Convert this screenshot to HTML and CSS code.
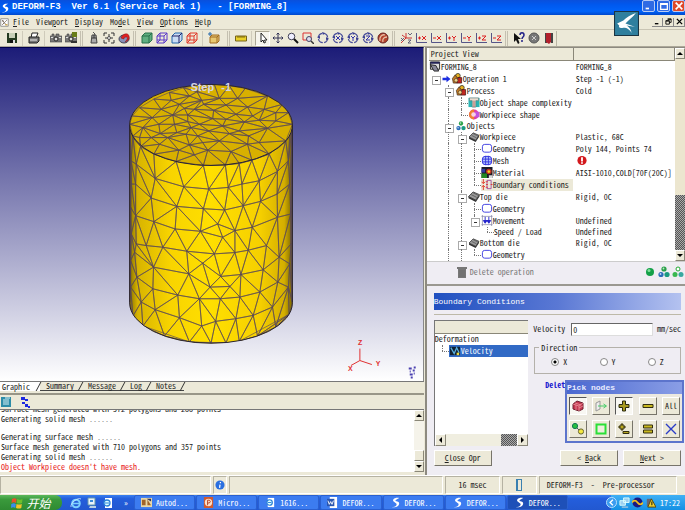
FILE: index.html
```html
<!DOCTYPE html>
<html lang="en">
<head>
<meta charset="utf-8">
<title>DEFORM-F3 - FORMING_8</title>
<link rel="stylesheet" href="styles.css">
</head>
<body>
<svg class="sprite" aria-hidden="true">
  <symbol id="logo" viewBox="0 0 12 12"><path d="M10 1C5 0 2 3 4 5s4 2 3 4-3 2-5 2c4 1 8-1 8-4S6 5 6 4s2-2 4-3z" fill="currentColor"/></symbol>
  <symbol id="doc" viewBox="0 0 12 12"><path d="M1 1h10v10H1z" fill="#fff" stroke="#777"/><path d="M3 3l5 6M3 9l3-3M7 5l2-2M4 3v2" stroke="#543"/><path d="M7 8h3v2H7z" fill="#ca5"/></symbol>
  <symbol id="save" viewBox="0 0 12 12"><path d="M1 1h10v10H1z" fill="#243a20"/><path d="M3 1h6v5H3z" fill="#c8d0b8"/><path d="M4 8h4v3H4z" fill="#111"/><path d="M7 8h2v3H7z" fill="#ddd"/></symbol>
  <symbol id="print" viewBox="0 0 12 12"><path d="M4 1h6L8 6H3z" fill="#fff" stroke="#222"/><path d="M1 5h10v4L9 11H1z" fill="#777" stroke="#222"/><path d="M2 8h7" stroke="#eee"/></symbol>
  <symbol id="cam" viewBox="0 0 12 12"><path d="M0 4h2V2h2v2h2V2h3v2h3v6H0z" fill="#777" stroke="#444" stroke-width=".6"/><circle cx="6" cy="7" r="2" fill="#ddd" stroke="#222"/><path d="M1 5.500h2M9 5.500h2" stroke="#ddd"/></symbol>
  <symbol id="cam2" viewBox="0 0 12 12"><use href="#cam"/><path d="M7 0h5v5H7z" fill="#687c18"/><path d="M6 9h6v2H6z" fill="#333"/></symbol>
  <symbol id="mouse" viewBox="0 0 12 12"><path d="M5 0l2 2-1 2" stroke="#555" fill="none"/><path d="M4 3h4l1 8H3z" fill="#aaa" stroke="#444"/><path d="M4 6h4M6 3v3" stroke="#333"/></symbol>
  <symbol id="fit" viewBox="0 0 12 12"><path d="M1 4V1h3M8 1h3v3M11 8v3H8M4 11H1V8" fill="none" stroke="#333"/><path d="M6 2v8M2 6h8" stroke="#333"/><circle cx="6" cy="6" r="1.500" fill="#eee" stroke="#555"/></symbol>
  <symbol id="undo" viewBox="0 0 12 12"><ellipse cx="6" cy="7" rx="5" ry="4" fill="#8790b8" stroke="#445"/><path d="M3 6c1-4 7-6 8-2 1 3-1 5-4 6 3-3 3-5 1-5S6 6 6 7z" fill="#d22" stroke="#811" stroke-width=".5"/></symbol>
  <symbol id="solid" viewBox="0 0 12 12"><path d="M1 4l3-3h7v7l-3 3H1z" fill="#5fae80" stroke="#28704a"/><path d="M1 4h7v7M8 4l3-3" fill="none" stroke="#28704a"/></symbol>
  <symbol id="wire" viewBox="0 0 12 12"><path d="M1 4l3-3h7v7l-3 3H1zM1 4h7v7M8 4l3-3M4 1v7H1M4 8h7M4 8l-3 3" fill="none" stroke="currentColor"/></symbol>
  <symbol id="hidden" viewBox="0 0 12 12"><path d="M1 4l3-3h7v7l-3 3H1z" fill="#c9dcf4" stroke="#26a"/><path d="M1 4h7v7M8 4l3-3" fill="none" stroke="#226"/></symbol>
  <symbol id="crate" viewBox="0 0 12 12"><path d="M2 5l2-2h7v6l-2 2H2z" fill="#e8c870" stroke="#a06a20"/><path d="M2 5h7v6M9 5l2-2" fill="none" stroke="#a06a20"/><path d="M0 2h4M2 0v4" stroke="#26a"/></symbol>
  <symbol id="ruler" viewBox="0 0 12 12"><path d="M.500 4h11v5H.500z" fill="#e8cf28" stroke="#76641c"/><path d="M3 4v2M5 4v2M7 4v2M9 4v2" stroke="#554400" stroke-width=".7"/></symbol>
  <symbol id="pointer" viewBox="0 0 12 12"><path d="M4 1v9l2-2 1 3 1.500-.6L7.500 8H10z" fill="#fff" stroke="#222"/></symbol>
  <symbol id="move" viewBox="0 0 12 12"><path d="M6 1v10M1 6h10M4.500 2.500L6 1l1.500 1.500M4.500 9.500L6 11l1.500-1.500M2.500 4.500L1 6l1.500 1.500M9.500 4.500L11 6 9.500 7.500" fill="none" stroke="#335"/></symbol>
  <symbol id="lens" viewBox="0 0 12 12"><circle cx="4.500" cy="4.500" r="3.300" fill="#eef" stroke="#445"/><path d="M7 7l4 4" stroke="#111" stroke-width="2"/></symbol>
  <symbol id="lensbox" viewBox="0 0 12 12"><path d="M1 1h8v7H1z" fill="none" stroke="#d33"/><circle cx="7" cy="7" r="2.500" fill="#dde" stroke="#446"/><path d="M9 9l3 3" stroke="#333" stroke-width="1.500"/></symbol>
  <symbol id="rot" viewBox="0 0 12 12"><circle cx="6" cy="6" r="4.700" fill="none" stroke="#4a4f9a" stroke-width="1.200" stroke-dasharray="6 1.400"/><path d="M0 5l3-1 0 3zM12 7L9 5v3zM5 0l3 1-2 2z" fill="#3a3f92"/></symbol>
  <symbol id="rx" viewBox="0 0 12 12"><use href="#rot"/><path d="M4 4l4 4M8 4L4 8" stroke="#33a"/></symbol>
  <symbol id="ry" viewBox="0 0 12 12"><use href="#rot"/><path d="M4 4l2 2 2-2M6 6v3" stroke="#33a" fill="none"/></symbol>
  <symbol id="rz" viewBox="0 0 12 12"><use href="#rot"/><path d="M4 4h4L4 8h4" stroke="#33a" fill="none"/></symbol>
  <symbol id="ball" viewBox="0 0 12 12"><circle cx="6" cy="6" r="5" fill="#b4442e" stroke="#622"/><path d="M3 9C2 5 5 2 8 3M6 10C5 7 7 5 10 5" stroke="#e8c0a8" stroke-width="1.300" fill="none"/></symbol>
  <symbol id="iso" viewBox="0 0 12 12"><path d="M6 1v5L1 11M6 6h6M6 6L2 3" fill="none" stroke="#c33"/><path d="M1 6l3 3M4 6L1 9M8 1l2 2 2-2M8 8h3L8 11h3" stroke="#446" stroke-width=".8" fill="none"/></symbol>
  <symbol id="axis" viewBox="0 0 12 12"><path d="M1.500 1v9.500H12" fill="none" stroke="#558"/><path d="M3 6h3" stroke="#d22"/></symbol>
  <symbol id="px" viewBox="0 0 12 12"><use href="#axis"/><path d="M4.500 4.500v3M7 4l4 4M11 4L7 8" stroke="#d22"/></symbol>
  <symbol id="mx" viewBox="0 0 12 12"><use href="#axis"/><path d="M7 4l4 4M11 4L7 8" stroke="#d22"/></symbol>
  <symbol id="py" viewBox="0 0 12 12"><use href="#axis"/><path d="M4.500 4.500v3M7 4l2 2 2-2M9 6v3" stroke="#d22" fill="none"/></symbol>
  <symbol id="my" viewBox="0 0 12 12"><use href="#axis"/><path d="M7 4l2 2 2-2M9 6v3" stroke="#d22" fill="none"/></symbol>
  <symbol id="pz" viewBox="0 0 12 12"><use href="#axis"/><path d="M4.500 4.500v3M7 4h4L7 8h4" stroke="#d22" fill="none"/></symbol>
  <symbol id="mz" viewBox="0 0 12 12"><use href="#axis"/><path d="M7 4h4L7 8h4" stroke="#d22" fill="none"/></symbol>
  <symbol id="help" viewBox="0 0 12 12"><path d="M1 1v9l2-2 2 4 1.500-1L5 7h3z" fill="#111"/><path d="M7 3c0-3 4-3 4 0 0 2-2 2-2 4M9 8v2" stroke="#228" stroke-width="1.500" fill="none"/></symbol>
  <symbol id="stop" viewBox="0 0 12 12"><circle cx="6" cy="6" r="5" fill="#777" stroke="#555"/><path d="M4 4l4 4M8 4L4 8" stroke="#ccc"/></symbol>
  <symbol id="exit" viewBox="0 0 12 12"><path d="M2 1h8v10H8V3H4v8H2z" fill="#444"/><path d="M3 1h5v9l-2 2-3-2z" fill="#b3202c"/></symbol>
  <symbol id="project" viewBox="0 0 12 12"><path d="M1 1h10v8H1z" fill="#ddd" stroke="#222"/><path d="M1 2h10" stroke="#225" stroke-width="2"/><path d="M1 4l4 7h5L7 5z" fill="#889" stroke="#222"/></symbol>
  <symbol id="arrow" viewBox="0 0 12 12"><path d="M0 4h6V1l6 5-6 5V8H0z" fill="#1c2ee0"/></symbol>
  <symbol id="process" viewBox="0 0 12 12"><circle cx="7" cy="3" r="2.500" fill="#e8b020" stroke="#443"/><path d="M1 6l3-4 2 3v6H2z" fill="#c07a20" stroke="#432" stroke-width=".8"/><path d="M7 5h4v6H6z" fill="#c22820" stroke="#411" stroke-width=".8"/><circle cx="5" cy="8" r="2" fill="#efd58a" stroke="#532" stroke-width=".7"/></symbol>
  <symbol id="complex" viewBox="0 0 12 12"><path d="M0 1h12v10H0z" fill="#27b5b5"/><path d="M1 1h10v3H8v7H4V4H1z" fill="#e9dccf" stroke="#577" stroke-width=".7"/><path d="M6 4v7" stroke="#a55"/></symbol>
  <symbol id="shape" viewBox="0 0 12 12"><circle cx="6" cy="6" r="5.500" fill="#e040a0"/><path d="M6 .500a5.500 5.500 0 000 11z" fill="#f08030"/><path d="M7 3h5v6H7z" fill="#c050e0"/><circle cx="5.500" cy="6" r="2.500" fill="#f8d0e8"/></symbol>
  <symbol id="balls" viewBox="0 0 12 12"><circle cx="6" cy="3" r="2.600" fill="#28a048"/><circle cx="3" cy="8.500" r="2.600" fill="#2a6cb8"/><circle cx="9" cy="8.500" r="2.600" fill="#1a9a80"/><circle cx="5.500" cy="2.500" r=".9" fill="#bfe8c8"/><circle cx="2.500" cy="8" r=".9" fill="#bcd8f4"/></symbol>
  <symbol id="balls2" viewBox="0 0 12 12"><circle cx="6" cy="3" r="2" fill="#fff" stroke="#2a3"/><circle cx="3" cy="8.500" r="2.500" fill="#39b850"/><circle cx="9" cy="8.500" r="2.500" fill="#39a8a0"/></symbol>
  <symbol id="block" viewBox="0 0 12 12"><path d="M0 6l5-5 7 3-4 6z" fill="#999" stroke="#222" stroke-width=".8"/><path d="M0 6l8 4v2L0 8zM8 10l4-6v2l-4 6z" fill="#333"/><path d="M3 4l6 3M5 2l6 3" stroke="#444" stroke-width=".7"/></symbol>
  <symbol id="geo" viewBox="0 0 12 12"><rect x="1" y="1.500" width="10" height="8.500" rx="2.500" fill="#fff" stroke="#3a3ae0"/></symbol>
  <symbol id="mesh" viewBox="0 0 12 12"><rect x="1" y="1.500" width="10" height="9" rx="3" fill="#b8c8ff" stroke="#22d"/><path d="M4.500 1v10M7.500 1v10M1 4.500h10M1 7.500h10" stroke="#33d"/></symbol>
  <symbol id="material" viewBox="0 0 12 12"><path d="M0 0h12v12H0z" fill="#1a1a28"/><circle cx="8" cy="5" r="3" fill="#c03020"/><circle cx="8" cy="5" r="1.500" fill="#f0d020"/><path d="M0 7h6v5H0z" fill="#282"/><path d="M0 2h4v4H0z" fill="#323ca0"/><path d="M8 9h4v3H8z" fill="#ddd"/></symbol>
  <symbol id="bc" viewBox="0 0 12 12"><path d="M2 0v5M0 3l2 2 2-2M2 7v5M0 9l2-2 2 2" stroke="#e03020" fill="none"/><path d="M6 1.500h4.500v9H6z" fill="none" stroke="#a050a0"/><path d="M5 3h2M5 6h2M5 9h2M10 6h2" stroke="#d33"/></symbol>
  <symbol id="movement" viewBox="0 0 12 12"><path d="M0 1.500h12M0 10.500h12M1 0v12M11 0v12" stroke="#88a" stroke-width=".8"/><path d="M4 2v6M8 2v6M2 6l2 3 2-3zM6 6l2 3 2-3z" stroke="#22c" fill="#22c"/></symbol>
  <symbol id="alert" viewBox="0 0 12 12"><circle cx="6" cy="6" r="5" fill="#d3181c"/><path d="M6 2.500V7M6 8v1.500" stroke="#fff" stroke-width="2"/></symbol>
  <symbol id="trash" viewBox="0 0 12 12"><path d="M1 1h10v2H1zM2 3h8v9H2z" fill="#777"/><path d="M4 4v7M6 4v7M8 4v7" stroke="#666" stroke-width=".6"/></symbol>
  <symbol id="dot" viewBox="0 0 12 12"><circle cx="6" cy="6" r="4" fill="#14a048"/><circle cx="5" cy="4.500" r="1.500" fill="#7fe09a"/></symbol>
  <symbol id="vel" viewBox="0 0 12 12"><path d="M0 1h12v10H0z" fill="#123"/><path d="M1 2l4 7 3-7 3 6" stroke="#59b0e0" fill="none" stroke-width="1.500"/><path d="M8 8h3v3H8z" fill="#e8d840"/></symbol>
  <symbol id="cube" viewBox="0 0 12 12"><path d="M1 4l4-3 6 2v6l-4 2-6-2z" fill="#c43850" stroke="#702030"/><path d="M1 4l6 2 4-3M7 6v5M3 3l6 2M4 5v5M7 8l4-2" stroke="#f0a0a8" stroke-width=".7" fill="none"/></symbol>
  <symbol id="plane" viewBox="0 0 12 12"><path d="M1 3l4-2v8l-4 2z" fill="#eee" stroke="#999"/><path d="M3 6h8M8.500 4l3 2-3 2" stroke="#4c6" fill="none"/></symbol>
  <symbol id="plus" viewBox="0 0 12 12"><path d="M4.500 1h3v3.500H11v3H7.500V11h-3V7.500H1v-3h3.500z" fill="#a89a20" stroke="#2a2a10"/></symbol>
  <symbol id="minus" viewBox="0 0 12 12"><path d="M1 4.500h10v3H1z" fill="#c8b820" stroke="#332e10"/></symbol>
  <symbol id="nodes" viewBox="0 0 12 12"><circle cx="3" cy="3" r="2.600" fill="#28c040" stroke="#175"/><circle cx="9" cy="8.500" r="2.600" fill="#f4e840" stroke="#663"/><path d="M5 5l2 2" stroke="#555"/></symbol>
  <symbol id="square" viewBox="0 0 12 12"><path d="M1.500 1.500h9v9h-9z" fill="#eeeede" stroke="#2be038" stroke-width="2"/></symbol>
  <symbol id="plusminus" viewBox="0 0 12 12"><path d="M3 1h2v2h2v2H5v2H3V5H1V3h2zM5 8.500h6v2H5z" fill="#b8a820" stroke="#332e10"/></symbol>
  <symbol id="equal" viewBox="0 0 12 12"><path d="M1.500 2h9v3h-9zM1.500 7h9v3h-9z" fill="#c8b820" stroke="#332e10"/></symbol>
  <symbol id="cross" viewBox="0 0 12 12"><path d="M1 1l10 10M11 1L1 11" stroke="#2a3cc8" stroke-width="1.400"/></symbol>
  <symbol id="log" viewBox="0 0 12 12"><path d="M1 1h10v10H1z" fill="#2d8ca8"/><path d="M3 4h6M3 6h6M3 8h6M5 2h5" stroke="#d8f0f4"/></symbol>
  <symbol id="steps" viewBox="0 0 12 12"><path d="M2 1h4v3H2zM6 3h3v2H6zM3 6h3v2H3zM6 8h3v3H6zM9 10h2v2H9z" fill="#1c28e0"/></symbol>
  <symbol id="info" viewBox="0 0 12 12"><circle cx="6" cy="6" r="5.500" fill="#2a6fe0"/><path d="M6.500 2.500v1.500M6 5.500l-.500 4" stroke="#fff" stroke-width="1.500"/></symbol>
  <symbol id="flag" viewBox="0 0 12 12"><path d="M1 2q2.500-1.500 4.500 0L5 6Q3 4.500.500 6z" fill="#e8502a"/><path d="M6.200 2Q9 3.500 11.500 2L11 6Q8 7 5.700 6z" fill="#6cc02c"/><path d="M.300 7Q3 5.500 4.800 7l-.500 4Q2 9.500 0 11z" fill="#3a8cf0"/><path d="M5.500 7Q8 8 10.800 7l-.500 4Q8 12 5 11z" fill="#f4c428"/></symbol>
  <symbol id="ie" viewBox="0 0 12 12"><circle cx="6" cy="6.500" r="3.800" fill="none" stroke="#7cd0ff" stroke-width="2"/><path d="M3 6.500h7" stroke="#7cd0ff" stroke-width="1.500"/><path d="M1 10C0 6 8 0 11 2" stroke="#d4f0ff" fill="none" stroke-width=".8"/></symbol>
  <symbol id="desk" viewBox="0 0 12 12"><path d="M2 1h7v7H2z" fill="#eaf3fa" stroke="#69a"/><path d="M4 3h3v2H4z" fill="#3a8ad8"/><path d="M4 9h6v2H3z" fill="#b8d0e4"/></symbol>
  <symbol id="page" viewBox="0 0 12 12"><path d="M3 1h7v10H3z" fill="#fff"/><circle cx="5" cy="6" r="3" fill="#dff" stroke="#2a80d8" stroke-width="1.300"/><path d="M3 6h4" stroke="#2a80d8"/></symbol>
  <symbol id="acad" viewBox="0 0 12 12"><path d="M0 1h12v10H0z" fill="#e8d8a8"/><path d="M1 3h4v6H1zM7 3l4 6H7z" fill="#a0642a"/><path d="M6 2h5v3z" fill="#335"/></symbol>
  <symbol id="ppt" viewBox="0 0 12 12"><path d="M1 0h10v12H1z" fill="#d05a30"/><circle cx="6" cy="6" r="4" fill="#fbe0cc"/><path d="M5 9V3.500h2q2 1.500 0 3H5" stroke="#b83c18" fill="none"/></symbol>
  <symbol id="word" viewBox="0 0 12 12"><path d="M3 0h8v12H3z" fill="#fff"/><path d="M0 2h8v8H0z" fill="#2a56b0"/><path d="M1 4l1.500 4L4 5l1.500 3L7 4" stroke="#fff" fill="none"/></symbol>
</svg>

<header class="titlebar">
  <svg class="icon"><use href="#logo"/></svg>
  <h1 class="pre">DEFORM-F3  Ver 6.1 (Service Pack 1)   - [FORMING_8]</h1>
  <div class="winbtns">
    <button aria-label="Minimize"><svg viewBox="0 0 12 12"><path d="M2 9h4" stroke="#fff" stroke-width="2"/></svg></button>
    <button aria-label="Maximize"><svg viewBox="0 0 12 12"><path d="M2 3h8v7H2zM2 4h8" fill="none" stroke="#fff" stroke-width="1.500"/></svg></button>
    <button class="close" aria-label="Close"><svg viewBox="0 0 12 12"><path d="M2 2l8 8M10 2l-8 8" stroke="#fff" stroke-width="2"/></svg></button>
  </div>
</header>

<nav class="menubar">
  <svg class="icon"><use href="#doc"/></svg>
  <button><u>F</u>ile</button><button>View<u>p</u>ort</button><button><u>D</u>isplay</button><button>Mo<u>d</u>el</button><button><u>V</u>iew</button><button><u>O</u>ptions</button><button><u>H</u>elp</button>
  <div class="docbtns">
    <button aria-label="Minimize document"><svg viewBox="0 0 8 8"><path d="M1 6.500h4" stroke="#000" stroke-width="1.500"/></svg></button>
    <button aria-label="Restore document"><svg viewBox="0 0 8 8"><path d="M3 1h4v4H5M1 3h4v4H1zM1 3.500h4M3 1.500h4" fill="none" stroke="#000"/></svg></button>
    <button aria-label="Close document"><svg viewBox="0 0 8 8"><path d="M1 1l6 6M7 1L1 7" stroke="#000" stroke-width="1.500"/></svg></button>
  </div>
  <svg class="bird" viewBox="0 0 24 24"><path d="M.500.500h23v23H.500z" fill="#2f7f9e" stroke="#1b3442"/><path d="M21 2C16 4 12 6 9 9L3 12l2 2c-1 2 1 3 4 2 4 0 6 2 8 5-1-4-3-6-5-7l8 1-9-3c3-3 7-6 10-10z" fill="#fff"/></svg>
</nav>

<div class="toolbar" role="toolbar">
  <div class="grp first"><button aria-label="Save"><svg><use href="#save"/></svg></button></div>
  <div class="grp"><button aria-label="Print"><svg><use href="#print"/></svg></button></div>
  <div class="grp"><button aria-label="Capture"><svg><use href="#cam"/></svg></button><button aria-label="Capture setup"><svg><use href="#cam2"/></svg></button></div>
  <div class="grp grip"><button aria-label="Mouse"><svg><use href="#mouse"/></svg></button><button aria-label="Fit"><svg><use href="#fit"/></svg></button><button aria-label="Undo view"><svg><use href="#undo"/></svg></button></div>
  <div class="grp grip"><button aria-label="Shaded"><svg><use href="#solid"/></svg></button><button class="violet" aria-label="Wireframe"><svg><use href="#wire"/></svg></button><button aria-label="Hidden line"><svg><use href="#hidden"/></svg></button><button class="red" aria-label="Outline"><svg><use href="#wire"/></svg></button></div>
  <div class="grp"><button aria-label="Object box"><svg><use href="#crate"/></svg></button></div>
  <div class="grp grip wide"><button aria-label="Measure"><svg><use href="#ruler"/></svg></button></div>
  <div class="grp"><button class="on" aria-label="Select"><svg><use href="#pointer"/></svg></button><button aria-label="Pan"><svg><use href="#move"/></svg></button><button aria-label="Zoom"><svg><use href="#lens"/></svg></button><button aria-label="Zoom window"><svg><use href="#lensbox"/></svg></button><button aria-label="Rotate"><svg><use href="#rot"/></svg></button><button aria-label="Rotate X"><svg><use href="#rx"/></svg></button><button aria-label="Rotate Y"><svg><use href="#ry"/></svg></button><button aria-label="Rotate Z"><svg><use href="#rz"/></svg></button><button aria-label="Trackball"><svg><use href="#ball"/></svg></button></div>
  <div class="grp grip"><button aria-label="Isometric"><svg><use href="#iso"/></svg></button><button aria-label="+X"><svg><use href="#px"/></svg></button><button aria-label="-X"><svg><use href="#mx"/></svg></button><button aria-label="+Y"><svg><use href="#py"/></svg></button><button aria-label="-Y"><svg><use href="#my"/></svg></button><button aria-label="+Z"><svg><use href="#pz"/></svg></button><button aria-label="-Z"><svg><use href="#mz"/></svg></button></div>
  <div class="grp grip last"><button aria-label="Context help"><svg><use href="#help"/></svg></button><button aria-label="Stop"><svg><use href="#stop"/></svg></button><button aria-label="Exit"><svg><use href="#exit"/></svg></button></div>
</div>

<main>
  <section class="left">
    <div class="viewport">
      <svg viewBox="0 0 424 333" aria-label="Workpiece mesh">
        <defs>
          <linearGradient id="side"><stop offset="0" stop-color="#8a7200"/><stop offset=".05" stop-color="#d8b400"/><stop offset=".25" stop-color="#f8d400"/><stop offset=".5" stop-color="#ffdf00"/><stop offset=".8" stop-color="#f6d000"/><stop offset=".95" stop-color="#d4ae00"/><stop offset="1" stop-color="#7a6600"/></linearGradient>
          <clipPath id="sideClip"><path d="M30 152A245 122 0 00520 152V687A245 122 0 0130 687z"/></clipPath>
          <clipPath id="topClip"><ellipse cx="275" cy="152" rx="245" ry="122"/></clipPath>
        </defs>
        <g transform="translate(120 26) scale(.33333)">
          <path d="M30 152A245 122 0 00520 152V687A245 122 0 0130 687z" fill="url(#side)"/>
          <ellipse cx="275" cy="152" rx="245" ry="122" fill="#d8b000"/>
          <path id="sideMesh" class="edges" clip-path="url(#sideClip)"/>
          <path id="topMesh" class="edges" clip-path="url(#topClip)"/>
          <path class="rim" d="M30 152A245 122 0 00520 152A245 122 0 0030 152V687A245 122 0 00520 687V152"/>
        </g>
        <text x="191" y="43" class="step">Step</text><text x="222" y="43" class="step">-1</text>
        <path d="M361 301v12l-9 5M361 313l12 4" fill="none" stroke="#e03030"/>
        <text x="359" y="297" class="ax">Z</text><text x="349" y="323" class="ax">X</text><text x="377" y="318" class="ax">Y</text>
        <path d="M410 321h3M415 320h2M411 324h1M414 323h2M411 327h3M415 326h1M412 330h2" stroke="#4a40b0" stroke-width="2"/>
      </svg>
    </div>
    <div class="tabs" role="tablist">
      <button role="tab" class="sel" aria-selected="true">Graphic</button><button role="tab">Summary</button><button role="tab">Message</button><button role="tab">Log</button><button role="tab">Notes</button>
    </div>
    <div class="logbar"><button aria-label="Log view"><svg><use href="#log"/></svg></button><button aria-label="Steps"><svg><use href="#steps"/></svg></button></div>
    <div class="logwrap">
      <div class="log">
        <p>Surface mesh generated with 572 polygons and 288 points</p>
        <p>Generating solid mesh <i>......</i></p>
        <p class="blank"></p>
        <p>Generating surface mesh <i>......</i></p>
        <p>Surface mesh generated with 710 polygons and 357 points</p>
        <p>Generating solid mesh <i>......</i></p>
        <p class="err">Object Workpiece doesn't have mesh.</p>
      </div>
      <div class="vscroll"><button aria-label="Scroll up"><b class="up"></b></button><span class="track"></span><span class="thumb"></span><button aria-label="Scroll down"><b class="down"></b></button></div>
    </div>
  </section>

  <section class="right">
    <div class="treewrap">
      <table class="tree">
        <thead><tr><th>Project View</th><th></th></tr></thead>
        <tbody>
          <tr><td><div><svg><use href="#project"/></svg>FORMING_8</div></td><td>FORMING_8</td></tr>
          <tr><td><div><s class="box"></s><svg class="small"><use href="#arrow"/></svg><svg><use href="#process"/></svg>Operation 1</div></td><td>Step -1 (-1)</td></tr>
          <tr><td><div><s></s><s class="tee box"></s><svg><use href="#process"/></svg>Process</div></td><td>Cold</td></tr>
          <tr><td><div><s></s><s class="bar"></s><s class="tee"></s><svg><use href="#complex"/></svg>Object shape complexity</div></td><td></td></tr>
          <tr><td><div><s></s><s class="bar"></s><s class="elbow"></s><svg><use href="#shape"/></svg>Workpiece shape</div></td><td></td></tr>
          <tr class="short"><td><div><s></s><s class="tee box"></s><svg><use href="#balls"/></svg>Objects</div></td><td></td></tr>
          <tr class="short"><td><div><s></s><s class="bar"></s><s class="tee box"></s><svg><use href="#block"/></svg>Workpiece</div></td><td>Plastic, 68C</td></tr>
          <tr><td><div><s></s><s class="bar"></s><s class="bar"></s><s class="tee"></s><svg><use href="#geo"/></svg>Geometry</div></td><td>Poly 144, Points 74</td></tr>
          <tr><td><div><s></s><s class="bar"></s><s class="bar"></s><s class="tee"></s><svg><use href="#mesh"/></svg>Mesh</div></td><td><svg><use href="#alert"/></svg></td></tr>
          <tr><td><div><s></s><s class="bar"></s><s class="bar"></s><s class="tee"></s><svg><use href="#material"/></svg>Material</div></td><td>AISI-1010,COLD[70F(20C)]</td></tr>
          <tr><td><div><s></s><s class="bar"></s><s class="bar"></s><s class="elbow"></s><span class="cur"><svg><use href="#bc"/></svg>Boundary conditions</span></div></td><td></td></tr>
          <tr><td><div><s></s><s class="bar"></s><s class="tee box"></s><svg><use href="#block"/></svg>Top die</div></td><td>Rigid, 0C</td></tr>
          <tr><td><div><s></s><s class="bar"></s><s class="bar"></s><s class="tee"></s><svg><use href="#geo"/></svg>Geometry</div></td><td></td></tr>
          <tr><td><div><s></s><s class="bar"></s><s class="bar"></s><s class="elbow box"></s><svg><use href="#movement"/></svg>Movement</div></td><td>Undefined</td></tr>
          <tr class="short"><td><div><s></s><s class="bar"></s><s class="bar"></s><s></s><s class="elbow"></s>Speed / Load</div></td><td>Undefined</td></tr>
          <tr class="short"><td><div><s></s><s class="bar"></s><s class="tee box"></s><svg><use href="#block"/></svg>Bottom die</div></td><td>Rigid, 0C</td></tr>
          <tr><td><div><s></s><s class="bar"></s><s class="bar"></s><s class="elbow"></s><svg><use href="#geo"/></svg>Geometry</div></td><td></td></tr>
        </tbody>
      </table>
      <div class="vscroll"><button aria-label="Scroll up"><b class="up"></b></button><span class="track deep"></span><span class="thumb dither"></span><button aria-label="Scroll down"><b class="down"></b></button></div>
    </div>

    <div class="opbar">
      <button class="del" disabled><svg><use href="#trash"/></svg>Delete operation</button>
      <button aria-label="Object"><svg><use href="#dot"/></svg></button><button aria-label="Objects"><svg><use href="#balls"/></svg></button><button aria-label="Inter-object"><svg><use href="#balls2"/></svg></button>
    </div>

    <form class="bc">
      <h2>Boundary Conditions</h2>
      <div class="cols">
        <div class="list">
          <div class="lhead"></div>
          <ul><li>Deformation</li><li class="child"><s class="elbow"></s><span><svg><use href="#vel"/></svg>Velocity</span></li></ul>
          <div class="hscroll"><button type="button" aria-label="Scroll left"><b class="lt"></b></button><span class="track"></span><span class="dither"></span><button type="button" aria-label="Scroll right"><b class="rt"></b></button></div>
        </div>
        <div class="fields">
          <div class="line"><label for="vel-in">Velocity</label><input id="vel-in" type="text" value="0"><span>mm/sec</span></div>
          <fieldset><legend>Direction</legend>
            <label><input type="radio" name="dir" checked>X</label><label><input type="radio" name="dir">Y</label><label><input type="radio" name="dir">Z</label>
          </fieldset>
          <div class="dline"><a href="#">Delete</a><span>( )</span></div>
        </div>
      </div>
      <div class="nav"><button type="button"><u>C</u>lose Opr</button><span></span><button type="button">&lt; <u>B</u>ack</button><button type="button"><u>N</u>ext &gt;</button></div>
      <div class="palette">
        <h3>Pick nodes</h3>
        <div class="keys">
          <button type="button" class="on" aria-label="Surface"><svg><use href="#cube"/></svg></button><button type="button" aria-label="Plane"><svg><use href="#plane"/></svg></button><button type="button" class="on" aria-label="Add"><svg><use href="#plus"/></svg></button><button type="button" aria-label="Remove"><svg><use href="#minus"/></svg></button><button type="button">All</button>
          <button type="button" aria-label="Nodes"><svg><use href="#nodes"/></svg></button><button type="button" aria-label="Window"><svg><use href="#square"/></svg></button><button type="button" aria-label="Toggle"><svg><use href="#plusminus"/></svg></button><button type="button" aria-label="Same"><svg><use href="#equal"/></svg></button><button type="button" aria-label="Clear"><svg><use href="#cross"/></svg></button>
        </div>
      </div>
    </form>
  </section>
</main>

<footer class="status">
  <span class="c0"></span><span class="c1"><svg><use href="#info"/></svg></span><span class="c2"></span><span class="c3">16 msec</span><span class="c4"><i></i></span><span class="c5 pre">DEFORM-F3  -  Pre-processor</span>
</footer>

<nav class="taskbar">
  <button class="start"><svg><use href="#flag"/></svg>开始</button>
  <div class="quick"><button aria-label="Browser"><svg><use href="#ie"/></svg></button><button aria-label="Desktop"><svg><use href="#desk"/></svg></button><button aria-label="Outlook"><svg><use href="#page"/></svg></button><span>»</span></div>
  <div class="tasks">
    <button><svg><use href="#acad"/></svg>Autod...</button><button><svg><use href="#ppt"/></svg>Micro...</button><button><svg><use href="#page"/></svg>1616...</button><button><svg><use href="#word"/></svg>DEFOR...</button><button><svg><use href="#logo"/></svg>DEFOR...</button><button><svg><use href="#logo"/></svg>DEFOR...</button><button class="on"><svg><use href="#logo"/></svg>DEFOR...</button>
  </div>
  <div class="tray">
    <svg viewBox="0 0 12 12"><circle cx="6" cy="6" r="5.500" fill="#3a9cf0" stroke="#bfe4ff"/><path d="M7.500 3L4.500 6l3 3" stroke="#fff" stroke-width="1.500" fill="none"/></svg>
    <svg viewBox="0 0 12 12"><path d="M1 4h6v5H1zM5 1h6v5H5z" fill="#9cd0f0" stroke="#dff"/><path d="M3 11h7" stroke="#ddd"/></svg>
    <svg viewBox="0 0 12 12"><circle cx="6" cy="6" r="5.500" fill="#1a1a80"/><path d="M0 6q3-4 6 0t6 0" stroke="#f0c020" fill="none" stroke-width="2"/></svg>
    <svg viewBox="0 0 12 12"><path d="M2 2h5v8H2z" fill="#667"/><path d="M7 2l5 9H3z" fill="#f0d030" stroke="#540"/><path d="M7.500 5v4" stroke="#000"/></svg>
    <time>17:22</time>
  </div>
</nav>
<script src="mesh.js"></script>
</body>
</html>
```

FILE: styles.css
```css
* { box-sizing: border-box; }
body {
  margin: 0; height: 100vh; display: flex; flex-direction: column; overflow: hidden;
  background: #ece9d8; color: #222;
  font: 8px/10px "Noto Sans Mono CJK SC", "Liberation Mono", monospace;
}
button, input { font: inherit; color: inherit; }
button { border: 0; background: none; padding: 0; display: flex; align-items: center; justify-content: center; }
h1, h2, h3, p, ul { margin: 0; padding: 0; list-style: none; }
svg { display: block; flex: none; width: 12px; height: 12px; }
.sprite { position: absolute; width: 0; height: 0; }
.pre { white-space: pre; }

.titlebar {
  flex: none; height: 15px; display: flex; align-items: center; overflow: hidden;
  background: linear-gradient(#0a50dc, #0058ee 30%, #0064fa 75%, #0048cc); color: #fff;
}
.titlebar > svg { width: 10px; height: 10px; margin-right: 2px; }
.titlebar h1 { flex: 1; font: bold 9px/12px "Liberation Mono", monospace; padding-bottom: 2px; }
.winbtns { display: flex; gap: 2px; padding-bottom: 3px; }
.winbtns button { width: 13px; height: 12px; border: 1px solid #b8ccf4; border-radius: 2px; background: #2f6ae4; }
.winbtns svg { width: 10px; height: 10px; }
.winbtns .close { background: #e0482a; }

.menubar { flex: none; height: 14px; display: flex; align-items: center; position: relative; }
.menubar > .icon { width: 9px; height: 9px; }
.menubar > button { margin-left: 4px; margin-right: 3px; display: inline; }
.docbtns { margin-left: auto; display: flex; }
.docbtns button { width: 11px; height: 9px; border-right: 1px solid #888; border-bottom: 1px solid #888; }
.docbtns svg { width: 7px; height: 7px; }
.menubar .bird { position: absolute; right: 46px; top: -4px; width: 25px; height: 25px; z-index: 2; }

.toolbar { flex: none; height: 18px; display: flex; align-items: center; border-top: 1px solid #c9c5b4; border-bottom: 1px solid #aca899; }
.grp { display: flex; height: 15px; margin-left: 3px; padding-left: 3px; border-left: 1px solid #cfcbbb; }
.grp.first { border: 0; margin: 0; padding-left: 4px; }
.grp.grip { margin-left: 2px; border-left: 3px double #c4c0b0; }
.grp.wide { margin-left: 6px; }
.grp.last { border-right: 1px solid #bbb7a6; }
.toolbar button { width: 15px; height: 15px; }
.toolbar .on { background: #f6f5ee; border: 1px solid #aaa694; border-right-color: #fff; border-bottom-color: #fff; }
.violet { color: #5a38c8; }
.red { color: #e03828; }

main { flex: 1; min-height: 0; display: grid; grid-template-columns: 62fr 38fr; }
.left { display: flex; flex-direction: column; min-width: 0; padding-right: 1px; }
.viewport { flex: 1; min-height: 0; border-top: 1px solid #00004c; background: linear-gradient(#1c1c78, #fff); border-right: 1px solid #888; }
.viewport svg { width: 100%; height: 100%; }
.edges { fill: none; stroke: #5a4a58; stroke-width: 2; }
.rim { fill: none; stroke: #2a2430; stroke-width: 3; }
.step { font: bold 11px "Liberation Sans", sans-serif; fill: #d4d4e4; }
.ax { font: bold 7px "Liberation Sans", sans-serif; fill: #e03030; }

.tabs { flex: none; height: 14px; display: flex; align-items: flex-start; border-top: 1px solid #777; border-bottom: 2px solid #999688; }
.tabs button { height: 9px; padding: 0 8px 0 6px; border-bottom: 1px solid #444; position: relative; }
.tabs button::after { content: ""; position: absolute; right: 1px; top: 0; height: 9px; border-right: 1px solid #333; transform: skewX(-28deg); }
.tabs .sel { background: #fff; padding: 0 10px 0 2px; border: 0; }
.logbar { flex: none; height: 14px; display: flex; gap: 7px; align-items: center; }
.logwrap { flex: none; height: 63px; display: flex; border-top: 1px solid #777; background: #fff; margin-bottom: 3px; }
.log { flex: 1; min-width: 0; display: flex; flex-direction: column; justify-content: flex-end; overflow: hidden; padding-left: 1px; white-space: pre; }
.log p { height: 10px; flex: none; }
.log .blank { height: 8px; }
.log i { color: #888; font-style: normal; }
.log .err { color: #e82020; }

.vscroll { flex: none; width: 10px; display: flex; flex-direction: column; background: #f5f3ea; }
.vscroll button, .hscroll button, .thumb { flex: none; height: 11px; background: #ece9d8; border: 1px solid; border-color: #fff #8a8778 #8a8778 #fff; }
.vscroll .track { flex: 1; }
.vscroll .deep { background: #ece6cf; flex: 15; }
.vscroll .thumb.dither { flex: 6; border: 0; height: auto; }
.dither { background: repeating-conic-gradient(#555 0 25%, #aaa 0 50%) 0 0 / 2px 2px; }
.up, .down, .lt, .rt { border: 3px solid transparent; }
.up { border-top: 0; border-bottom-color: #000; }
.down { border-bottom: 0; border-top-color: #000; }
.lt { border-left: 0; border-right-color: #000; }
.rt { border-right: 0; border-left-color: #000; }

.right { display: flex; flex-direction: column; min-width: 0; border-left: 2px solid #8d8a80; background: #efedf3; }
.treewrap { flex: none; display: flex; background: #fff; border-top: 1px solid #8d8a80; padding-left: 2px; border-bottom: 1px solid #ccc; overflow: hidden; }
.tree { flex: 1; border-collapse: collapse; table-layout: fixed; width: 100%; white-space: nowrap; align-self: flex-start; }
.tree th { height: 12px; padding: 0 0 0 2px; text-align: left; font-weight: normal; background: #ece9d8; border-right: 1px solid #8a8778; border-bottom: 1px solid #8a8778; }
.tree th:first-child { width: 59%; }
.tree td { padding: 0; height: 12px; line-height: 10px; }
.tree td + td { padding-left: 2px; }
.tree .short td { height: 11px; }
.tree td svg { height: 11px; }
.tree td div { display: flex; align-items: center; height: 12px; }
.tree .short td div { height: 11px; }
.tree .short td svg { height: 10px; }
.tree svg.small { width: 9px; height: 8px; }
.cur { display: flex; align-items: center; background: #ece9d8; padding-right: 4px; height: 12px; }
s { flex: none; width: 13px; align-self: stretch; position: relative; text-decoration: none; }
s.bar::before, s.tee::before, s.elbow::before { content: ""; position: absolute; left: 6px; top: 0; bottom: 0; border-left: 1px dotted #777; }
s.elbow::before { bottom: 50%; }
s.tee::after, s.elbow::after { content: ""; position: absolute; left: 6px; right: 0; top: 50%; border-top: 1px dotted #777; }
s.box::after { content: ""; position: absolute; left: 3px; right: auto; top: 3px; width: 7px; height: 7px; border: 1px solid #aaa; background: linear-gradient(#333, #333) center / 3px 1px no-repeat #fff; }

.opbar { flex: none; height: 24px; display: flex; align-items: center; gap: 2px; padding: 0 1px 2px 29px; border-bottom: 2px solid #9a9890; }
.opbar .del { margin-right: auto; gap: 2px; color: #777; }

.bc { flex: 1; min-height: 0; display: flex; flex-direction: column; padding: 7px 4px 9px 7px; position: relative; }
.bc h2 { flex: none; height: 17px; font: 8px/17px "Liberation Mono", monospace; color: #fff; background: linear-gradient(90deg, #2050c0, #5a78d4 50%, #b4c2f0); }
.cols { flex: 1; min-height: 0; display: flex; gap: 5px; margin-top: 4px; border-top: 1px solid #bdb9a8; padding-top: 5px; }
.list { flex: 38; display: flex; flex-direction: column; background: #fff; border-top: 1px solid #777; border-left: 1px solid #777; }
.lhead { height: 13px; background: #ece9d8; border-bottom: 1px solid #8a8778; }
.list ul { flex: 1; }
.list li { height: 11px; display: flex; }
.list .child { height: 12px; padding-left: 1px; }
.child span { flex: 1; display: flex; align-items: center; background: #316ac5; color: #fff; }
.child svg { height: 10px; }
.hscroll { height: 12px; display: flex; background: #f0eee0; }
.hscroll button { width: 11px; height: 12px; }
.hscroll .track { flex: 10; }
.hscroll .dither { flex: 3; }
.fields { flex: 60; min-width: 0; }
.line { display: flex; align-items: center; gap: 4px; margin-top: 3px; }
.line input { flex: 1; min-width: 0; height: 13px; margin-left: 2px; padding: 0 1px; background: #fff; border: 1px solid; border-color: #666 #ddd #ddd #666; }
fieldset { margin: 7px 0 0 1px; padding: 3px 0 4px; border: 1px solid #b4b1aa; display: flex; justify-content: space-around; height: 31px; }
legend { margin-left: 4px; padding: 0 2px; }
fieldset label { display: flex; align-items: center; gap: 4px; }
input[type=radio] { appearance: none; margin: 0; width: 8px; height: 8px; border-radius: 50%; border: 1px solid #888; background: #fff; }
input[type=radio]:checked { background: radial-gradient(#000 0 1px, #fff 2px); }
.dline { display: flex; justify-content: space-between; margin-top: 6px; padding: 0 22px 0 12px; }
.dline a { color: #1c1cd0; text-decoration: none; font-weight: bold; }
.nav { flex: none; display: flex; gap: 5px; margin-top: 4px; }
.nav span { flex: 1; }
.nav button { width: 58px; height: 16px; background: #ece9d8; border: 1px solid; border-color: #fff #77746a #77746a #fff; display: block; }

.palette { position: absolute; right: 1px; bottom: 32px; width: 119px; border: 2px solid #5c74cc; background: #ece9e0; }
.palette h3 { height: 12px; font: bold 8px/12px "Liberation Mono", monospace; color: #e8ecff; background: linear-gradient(90deg, #4a68d0, #8a9ee6); }
.keys { display: grid; grid-template-columns: repeat(5, 18px); justify-content: space-between; gap: 5px 0; padding: 3px 2px; }
.keys button { height: 18px; background: #ece9d8; border: 1px solid; border-color: #fff #77746a #77746a #fff; }
.keys .on { border-color: #555 #fff #fff #555; background: #f8f7f2; }

.status { flex: none; height: 20px; display: flex; gap: 2px; padding: 0 8px 1px 0; border-top: 1px solid #fff; }
.status span { display: flex; align-items: center; justify-content: center; border: 1px solid; border-color: #b5b2a2 #fff #fff #b5b2a2; }
.status .c0 { flex: 217; }
.status .c1 { flex: 12; }
.status .c2 { flex: 220; }
.status .c3 { flex: 55; }
.status .c4 { flex: 34; }
.status .c5 { flex: 134; justify-content: flex-start; padding-left: 7px; }
.status svg { width: 10px; height: 10px; }
.c4 i { width: 6px; height: 12px; border: 1px solid #3a80b0; border-left-width: 2px; }

.taskbar { flex: none; height: 15px; display: flex; background: linear-gradient(#3a80f0, #245edc 25%, #2258d0); color: #fff; }
.start { width: 62px; gap: 3px; border-radius: 0 7px 7px 0; background: linear-gradient(#5cb85c, #3a9a3c 30%, #2f8a32); font: italic 12px/15px "Noto Sans CJK SC", sans-serif; }
.quick { display: flex; align-items: center; gap: 4px; padding-left: 8px; width: 72px; }
.quick span { margin-left: 6px; }
.tasks { flex: 1; display: flex; gap: 1px; max-width: 434px; }
.tasks button { flex: 1; min-width: 0; justify-content: flex-start; gap: 4px; padding-left: 6px; background: #3c7cf0; border: 1px solid #2a60d0; border-radius: 2px; }
.tasks .on { background: #1e50b8; }
.tasks svg { width: 11px; height: 11px; }
.tray { margin-left: auto; display: flex; align-items: center; gap: 2px; padding: 0 5px 0 0; background: linear-gradient(#40b0f4, #1490e4); }
.tray svg { width: 11px; height: 11px; }
.tray svg:first-child { margin-left: -5px; }
.tray time { margin-left: 2px; }
```

FILE: mesh.js
```js
// Triangulates the surface nodes of the workpiece and draws the element edges.
const CX = 275, CY = 152, RX = 245, RY = 122;

const topNodes = [[30,150],[40,185],[63,217],[103,240],[170,262],[252,274],[318,272],[360,268],[398,258],[450,240],[500,200],[520,150],
[508,115],[490,90],[445,65],[378,42],[330,34],[285,30],[240,32],[192,40],[150,54],[103,74],[60,100],[38,125],
[233,52],[247,78],[300,72],[210,65],[155,78],[125,105],[180,90],[195,102],[225,105],[253,90],[283,108],[320,92],[355,72],
[385,98],[350,120],[400,125],[435,105],[470,115],[160,122],[205,122],[98,130],[118,150],[165,150],[205,142],[240,150],
[280,133],[320,135],[375,143],[420,138],[470,140],[445,162],[122,178],[95,190],[145,190],[172,175],[215,160],[200,180],
[268,170],[235,185],[310,155],[330,178],[388,185],[360,170],[300,200],[265,228],[250,205],[210,212],[178,228],[225,242],
[335,232],[385,210],[420,205],[70,160],[60,190],[120,210]];

const sideNodes = [[30,150],[40,190],[63,217],[103,240],[170,262],[252,274],[318,272],[360,268],[398,258],[450,240],[500,200],[512,185],[520,150],
[50,270],[107,313],[193,338],[268,345],[327,340],[368,330],[420,320],[475,292],[508,260],[34,260],
[35,330],[48,330],[95,372],[172,397],[252,404],[316,408],[372,395],[424,382],[474,360],[512,330],
[33,400],[48,425],[103,443],[167,465],[243,472],[295,450],[310,490],[347,470],[399,460],[475,430],[515,420],
[35,480],[50,510],[80,515],[130,520],[202,532],[285,540],[347,536],[387,529],[442,515],[480,550],[516,510],
[33,560],[45,535],[102,580],[208,600],[304,608],[365,602],[432,588],[476,625],[512,570],[250,568],
[33,640],[52,610],[100,645],[175,664],[240,675],[303,675],[362,670],[422,655],[460,700],[508,640],[272,640],[332,638],
[65,685],[107,708],[180,732],[247,757],[289,743],[350,735],[402,725],
[30,687],[40,727],[70,757],[135,787],[210,805],[275,809],[320,808],[360,803],[415,787],[470,760],[510,722],[520,687]];

function delaunay(p) {
  const pts = p.concat([[-9000, -9000], [9000, -9000], [0, 9000]]), n = p.length;
  const make = (a, b, c) => {
    const [ax, ay] = pts[a], [bx, by] = pts[b], [cx, cy] = pts[c];
    const d = 2 * (ax * (by - cy) + bx * (cy - ay) + cx * (ay - by));
    const A = ax * ax + ay * ay, B = bx * bx + by * by, C = cx * cx + cy * cy;
    const x = (A * (by - cy) + B * (cy - ay) + C * (ay - by)) / d;
    const y = (A * (cx - bx) + B * (ax - cx) + C * (bx - ax)) / d;
    return { v: [a, b, c], x, y, r: Math.hypot(ax - x, ay - y) };
  };
  let tris = [make(n, n + 1, n + 2)];
  for (let i = 0; i < n; i++) {
    const edges = new Map();
    tris = tris.filter(t => {
      if (Math.hypot(pts[i][0] - t.x, pts[i][1] - t.y) > t.r) return true;
      for (let k = 0; k < 3; k++) {
        const e = [t.v[k], t.v[(k + 1) % 3]].sort((a, b) => a - b), key = e.join();
        edges.has(key) ? edges.delete(key) : edges.set(key, e);
      }
      return false;
    });
    edges.forEach(([a, b]) => tris.push(make(a, b, i)));
  }
  return tris.map(t => t.v).filter(v => v.every(k => k < n));
}

// Nodes are unrolled onto the true surface before they are joined.
const flat = ([x, y]) => [x, y * 2];
const unroll = ([x, y], i) => {
  const s = Math.max(-1, Math.min(1, (x - CX) / RX));
  return [Math.asin(s) * RX + (i % 7) / 100, y - RY * Math.sqrt(1 - s * s)];
};
const path = (pts, map) => delaunay(pts.map(map)).map(v => "M" + v.map(k => pts[k].join(" ")).join("L") + "z").join("");

document.getElementById("topMesh").setAttribute("d", path(topNodes, flat));
document.getElementById("sideMesh").setAttribute("d", path(sideNodes, unroll));
```
